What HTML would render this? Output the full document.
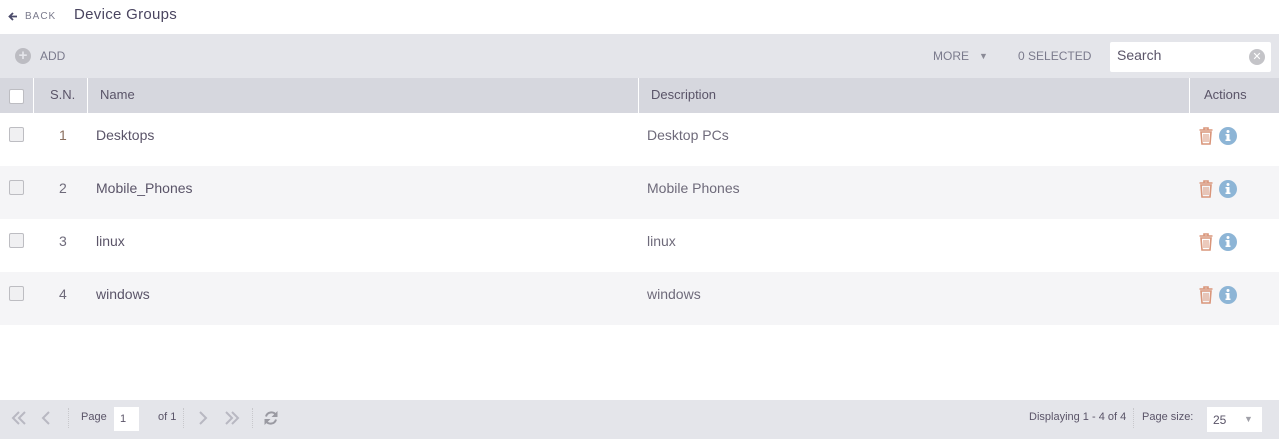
<!DOCTYPE html>
<html><head><meta charset="utf-8"><style>
*{box-sizing:border-box;margin:0;padding:0}
body{width:1279px;height:439px;background:#fff;font-family:"Liberation Sans",sans-serif;position:relative;overflow:hidden;color:#5a5468}
.abs{position:absolute}
.hdr{left:0;top:0;width:1279px;height:34px;background:#fff;box-shadow:0 1px 3px rgba(0,0,0,.08)}
.tb{left:0;top:34px;width:1279px;height:44px;background:#e4e5ea}
.th{left:0;top:78px;width:1279px;height:35px;background:#d6d7de}
.row{left:0;width:1279px;height:53px}
.cb{width:15px;height:15px;border:1px solid #bdbdc2;background:#f0f0f2;border-radius:2px}
.t{font-size:14px;color:#5a5468}
.ft{left:0;top:400px;width:1279px;height:39px;background:#e4e5ea}
.sep{width:1px;height:35px;background:#fff;top:78px}
.dot{width:1px;height:20px;border-left:1px dotted #c8c8cc;top:408px}
</style></head><body>
<div class="abs hdr"></div>
<svg class="abs" style="left:8px;top:12px" width="10" height="9" viewBox="0 0 10 9"><path d="M9 4.5H2M5 1L1.5 4.5 5 8" fill="none" stroke="#4a4a6a" stroke-width="1.8"/></svg>
<div class="abs" style="left:25px;top:11px;font-size:10px;color:#7a7a8c;letter-spacing:1px">BACK</div>
<div class="abs" style="left:74px;top:6px;font-size:15px;color:#4a4560;letter-spacing:.3px">Device Groups</div>

<div class="abs tb"></div>
<div class="abs" style="left:15px;top:48px;width:16px;height:16px;border-radius:50%;background:#bcbcc2;color:#e4e5ea;font-size:15px;line-height:16px;text-align:center;font-weight:bold">+</div>
<div class="abs" style="left:40px;top:49px;font-size:12px;color:#7a7a8c">ADD</div>
<div class="abs" style="left:933px;top:49px;font-size:12px;color:#7a7a8c">MORE</div>
<div class="abs" style="left:979px;top:51px;font-size:9px;color:#8a8a96">&#9660;</div>
<div class="abs" style="left:1018px;top:49px;font-size:12px;color:#7a7a8c">0 SELECTED</div>
<div class="abs" style="left:1110px;top:42px;width:161px;height:30px;background:#fff;border-radius:2px"></div>
<div class="abs" style="left:1117px;top:47px;font-size:14px;color:#5a5468">Search</div>
<div class="abs" style="left:1249px;top:49px;width:16px;height:16px;border-radius:50%;background:#c4c4c8;color:#fff;font-size:11px;line-height:16px;text-align:center">&#10005;</div>

<div class="abs th"></div>
<div class="abs sep" style="left:33px"></div>
<div class="abs sep" style="left:87px"></div>
<div class="abs sep" style="left:638px"></div>
<div class="abs sep" style="left:1189px"></div>
<div class="abs cb" style="left:9px;top:89px;background:#fff"></div>
<div class="abs t" style="left:50px;top:87px;font-size:13px">S.N.</div>
<div class="abs t" style="left:100px;top:87px;font-size:13px">Name</div>
<div class="abs t" style="left:651px;top:87px;font-size:13px">Description</div>
<div class="abs t" style="left:1204px;top:87px;font-size:13px">Actions</div>

<div class="abs row" style="top:113px;background:#fff"></div>
<div class="abs row" style="top:166px;background:#f5f5f7"></div>
<div class="abs row" style="top:219px;background:#fff"></div>
<div class="abs row" style="top:272px;background:#f5f5f7"></div>

<div class="abs cb" style="left:9px;top:127px"></div>
<div class="abs t" style="left:59px;top:127px;color:#8a6e5e">1</div>
<div class="abs t" style="left:96px;top:127px">Desktops</div>
<div class="abs t" style="left:647px;top:127px;color:#6e6a7a">Desktop PCs</div>

<div class="abs cb" style="left:9px;top:180px"></div>
<div class="abs t" style="left:59px;top:180px;color:#6e6a7a">2</div>
<div class="abs t" style="left:96px;top:180px">Mobile_Phones</div>
<div class="abs t" style="left:647px;top:180px;color:#6e6a7a">Mobile Phones</div>

<div class="abs cb" style="left:9px;top:233px"></div>
<div class="abs t" style="left:59px;top:233px;color:#6e6a7a">3</div>
<div class="abs t" style="left:96px;top:233px">linux</div>
<div class="abs t" style="left:647px;top:233px;color:#6e6a7a">linux</div>

<div class="abs cb" style="left:9px;top:286px"></div>
<div class="abs t" style="left:59px;top:286px;color:#6e6a7a">4</div>
<div class="abs t" style="left:96px;top:286px">windows</div>
<div class="abs t" style="left:647px;top:286px;color:#6e6a7a">windows</div>

<svg class="abs" style="left:1197px;top:126px" width="44" height="200" viewBox="0 0 44 200">
<defs><g id="tr"><path d="M2.5 3h13M7 3V1h4v2M4 5h10l-1 12H5z" fill="none" stroke="#d9957a" stroke-width="1.6"/><path d="M7 7v8M9 7v8M11 7v8" stroke="#d9957a" stroke-width="1"/></g>
<g id="inf"><circle cx="31" cy="10" r="9" fill="#8db5d6"/><rect x="29.5" y="8" width="3" height="7" fill="#fff"/><rect x="28.5" y="8" width="3" height="1.5" fill="#fff"/><rect x="28.5" y="13.5" width="5" height="1.5" fill="#fff"/><circle cx="31" cy="5.5" r="1.5" fill="#fff"/></g></defs>
<use href="#tr" y="1"/><use href="#inf"/>
<use href="#tr" y="54"/><use href="#inf" y="53"/>
<use href="#tr" y="107"/><use href="#inf" y="106"/>
<use href="#tr" y="160"/><use href="#inf" y="159"/>
</svg>

<div class="abs ft"></div>
<svg class="abs" style="left:10px;top:410px" width="240" height="18" viewBox="0 0 240 18">
<g fill="none" stroke="#b8b8c2" stroke-width="2">
<path d="M9 2L3 8l6 6M15 2L9 8l6 6"/>
<path d="M39 2l-6 6 6 6"/>
<path d="M190 2l6 6-6 6"/>
<path d="M216 2l6 6-6 6M222 2l6 6-6 6"/>
</g>
</svg>
<svg class="abs" style="left:263px;top:410px" width="16" height="16" viewBox="0 0 16 16">
<g fill="none" stroke="#9a9aa2" stroke-width="2"><path d="M13 5A5.5 5.5 0 0 0 3 6.5M3 11a5.5 5.5 0 0 0 10-1.5"/></g>
<path d="M14.5 1v6h-6z M1.5 15V9h6z" fill="#9a9aa2"/>
</svg>
<div class="abs dot" style="left:68px"></div>
<div class="abs" style="left:81px;top:411px;font-size:11px;color:#5a5468">Page</div>
<div class="abs" style="left:114px;top:407px;width:25px;height:24px;background:#fff"></div>
<div class="abs" style="left:120px;top:413px;font-size:11px;color:#5a5468">1</div>
<div class="abs" style="left:158px;top:411px;font-size:11px;color:#5a5468">of 1</div>
<div class="abs dot" style="left:183px"></div>
<div class="abs dot" style="left:252px"></div>
<div class="abs" style="left:1029px;top:411px;font-size:11px;color:#5a5468">Displaying 1 - 4 of 4</div>
<div class="abs dot" style="left:1133px"></div>
<div class="abs" style="left:1142px;top:411px;font-size:11px;color:#5a5468">Page size:</div>
<div class="abs" style="left:1207px;top:407px;width:55px;height:25px;background:#fff"></div>
<div class="abs" style="left:1213px;top:413px;font-size:12px;color:#5a5468">25</div>
<div class="abs" style="left:1244px;top:414px;font-size:9px;color:#a0a0a8">&#9660;</div>
</body></html>
